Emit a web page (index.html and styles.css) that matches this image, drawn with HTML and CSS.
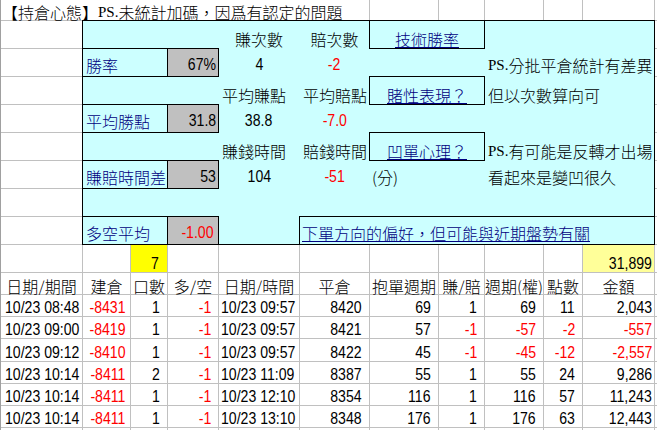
FILE: index.html
```html
<!DOCTYPE html>
<html lang="zh-Hant">
<head>
<meta charset="utf-8">
<title>持倉心態</title>
<link rel="stylesheet" href="styles.css">
</head>
<body>
<div class="sheet">
  <div class="cell title">【持倉心態】<span class="ps">PS.</span>未統計加碼，因爲有認定的問題</div>
  <div class="cell"></div><div class="cell"></div><div class="cell"></div><div class="cell"></div><div class="cell"></div><div class="cell"></div>

  <section class="panel">
    <div class="pc e ctr">賺次數</div>
    <div class="pc f ctr">賠次數</div>
    <div class="pc box g-h ctr"><a class="link">技術勝率</a></div>

    <div class="pc box label b-c mid">勝率</div>
    <div class="pc box stat d mid"><span class="n">67%</span></div>
    <div class="pc e ctr mid"><span class="n">4</span></div>
    <div class="pc f ctr mid neg"><span class="n">-2</span></div>
    <div class="pc i-k note mid"><span class="ps">PS.</span>分批平倉統計有差異</div>

    <div class="pc e lead">平均賺點</div>
    <div class="pc f lead">平均賠點</div>
    <div class="pc box g-h ctr"><a class="link">賭性表現？</a></div>
    <div class="pc i-k note">但以次數算向可</div>

    <div class="pc box label b-c mid">平均勝點</div>
    <div class="pc box stat d mid"><span class="n">31.8</span></div>
    <div class="pc e ctr mid"><span class="n">38.8</span></div>
    <div class="pc f ctr mid neg"><span class="n">-7.0</span></div>

    <div class="pc e lead">賺錢時間</div>
    <div class="pc f lead">賠錢時間</div>
    <div class="pc box g-h ctr"><a class="link">凹單心理？</a></div>
    <div class="pc i-k note"><span class="ps">PS.</span>有可能是反轉才出場</div>

    <div class="pc box label b-c mid">賺賠時間差</div>
    <div class="pc box stat d mid"><span class="n">53</span></div>
    <div class="pc e ctr mid"><span class="n">104</span></div>
    <div class="pc f ctr mid neg"><span class="n">-51</span></div>
    <div class="pc g mid unit">(分)</div>
    <div class="pc i-k note mid">看起來是變凹很久</div>

    <div class="pc blank-row"></div>

    <div class="pc box label b-c mid">多空平均</div>
    <div class="pc box stat d mid neg avg"><span class="n">-1.00</span></div>
    <div class="pc box f-k mid bias"><a class="link">下單方向的偏好，但可能與近期盤勢有關</a></div>
  </section>

  <div class="cell"></div><div class="cell"></div>
  <div class="cell"></div><div class="cell"></div>
  <div class="cell"></div><div class="cell"></div>
  <div class="cell"></div><div class="cell"></div>
  <div class="cell"></div><div class="cell"></div>
  <div class="cell"></div><div class="cell"></div>
  <div class="cell"></div><div class="cell"></div>
  <div class="cell"></div><div class="cell"></div>

  <div class="trow totals">
    <div class="cell"></div><div class="cell"></div>
    <div class="cell count"><span class="n">7</span></div>
    <div class="cell"></div><div class="cell"></div><div class="cell"></div><div class="cell"></div>
    <div class="cell"></div><div class="cell"></div><div class="cell"></div>
    <div class="cell sum"><span class="n">31,899</span></div>
    <div class="cell"></div>
  </div>

  <div class="trow head">
    <div class="cell">日期/期間</div><div class="cell">建倉</div><div class="cell">口數</div><div class="cell">多/空</div>
    <div class="cell">日期/時間</div><div class="cell">平倉</div><div class="cell">抱單週期</div><div class="cell">賺/賠</div>
    <div class="cell">週期(權)</div><div class="cell">點數</div><div class="cell">金額</div><div class="cell"></div>
  </div>

  <div class="trow data">
    <div class="cell"><span class="n">10/23 08:48</span></div><div class="cell neg"><span class="n">-8431</span></div><div class="cell"><span class="n">1</span></div><div class="cell neg"><span class="n">-1</span></div>
    <div class="cell"><span class="n">10/23 09:57</span></div><div class="cell"><span class="n">8420</span></div><div class="cell"><span class="n">69</span></div><div class="cell"><span class="n">1</span></div>
    <div class="cell"><span class="n">69</span></div><div class="cell"><span class="n">11</span></div><div class="cell"><span class="n">2,043</span></div><div class="cell"></div>
  </div>
  <div class="trow data">
    <div class="cell"><span class="n">10/23 09:00</span></div><div class="cell neg"><span class="n">-8419</span></div><div class="cell"><span class="n">1</span></div><div class="cell neg"><span class="n">-1</span></div>
    <div class="cell"><span class="n">10/23 09:57</span></div><div class="cell"><span class="n">8421</span></div><div class="cell"><span class="n">57</span></div><div class="cell neg"><span class="n">-1</span></div>
    <div class="cell neg"><span class="n">-57</span></div><div class="cell neg"><span class="n">-2</span></div><div class="cell neg"><span class="n">-557</span></div><div class="cell"></div>
  </div>
  <div class="trow data">
    <div class="cell"><span class="n">10/23 09:12</span></div><div class="cell neg"><span class="n">-8410</span></div><div class="cell"><span class="n">1</span></div><div class="cell neg"><span class="n">-1</span></div>
    <div class="cell"><span class="n">10/23 09:57</span></div><div class="cell"><span class="n">8422</span></div><div class="cell"><span class="n">45</span></div><div class="cell neg"><span class="n">-1</span></div>
    <div class="cell neg"><span class="n">-45</span></div><div class="cell neg"><span class="n">-12</span></div><div class="cell neg"><span class="n">-2,557</span></div><div class="cell"></div>
  </div>
  <div class="trow data">
    <div class="cell"><span class="n">10/23 10:14</span></div><div class="cell neg"><span class="n">-8411</span></div><div class="cell"><span class="n">2</span></div><div class="cell neg"><span class="n">-1</span></div>
    <div class="cell"><span class="n">10/23 11:09</span></div><div class="cell"><span class="n">8387</span></div><div class="cell"><span class="n">55</span></div><div class="cell"><span class="n">1</span></div>
    <div class="cell"><span class="n">55</span></div><div class="cell"><span class="n">24</span></div><div class="cell"><span class="n">9,286</span></div><div class="cell"></div>
  </div>
  <div class="trow data">
    <div class="cell"><span class="n">10/23 10:14</span></div><div class="cell neg"><span class="n">-8411</span></div><div class="cell"><span class="n">1</span></div><div class="cell neg"><span class="n">-1</span></div>
    <div class="cell"><span class="n">10/23 12:10</span></div><div class="cell"><span class="n">8354</span></div><div class="cell"><span class="n">116</span></div><div class="cell"><span class="n">1</span></div>
    <div class="cell"><span class="n">116</span></div><div class="cell"><span class="n">57</span></div><div class="cell"><span class="n">11,243</span></div><div class="cell"></div>
  </div>
  <div class="trow data">
    <div class="cell"><span class="n">10/23 10:14</span></div><div class="cell neg"><span class="n">-8411</span></div><div class="cell"><span class="n">1</span></div><div class="cell neg"><span class="n">-1</span></div>
    <div class="cell"><span class="n">10/23 13:10</span></div><div class="cell"><span class="n">8348</span></div><div class="cell"><span class="n">176</span></div><div class="cell"><span class="n">1</span></div>
    <div class="cell"><span class="n">176</span></div><div class="cell"><span class="n">63</span></div><div class="cell"><span class="n">12,443</span></div><div class="cell"></div>
  </div>

  <div class="trow">
    <div class="cell"></div><div class="cell"></div><div class="cell"></div><div class="cell"></div>
    <div class="cell"></div><div class="cell"></div><div class="cell"></div><div class="cell"></div>
    <div class="cell"></div><div class="cell"></div><div class="cell"></div><div class="cell"></div>
  </div>
</div>
</body>
</html>
```

FILE: styles.css
```css
* { box-sizing: border-box; }

html, body {
  margin: 0;
  padding: 0;
  background: #fff;
}

body {
  width: 657px;
  height: 430px;
  overflow: hidden;
  font-family: "Noto Sans CJK TC", sans-serif;
  font-weight: 300;
  font-size: 16px;
  line-height: 16px;
  color: #000;
}

.sheet {
  display: grid;
  grid-template-columns: 81px 47px 36px 50px 80px 69px 68px 45px 58px 38px 71px 2px;
  grid-template-rows: 20px repeat(9, 27px) 21px 21px 21px 22px 21px 21px 21px 2px;
  gap: 1px;
  width: 657px;
  height: 430px;
  background: #c0c0c0;
  border-left: 1px solid #a0a0a0;
}

.cell {
  background: #fff;
  display: flex;
  align-items: flex-end;
  padding: 0 2px;
  white-space: nowrap;
  min-width: 0;
}

/* narrow spreadsheet digits */
.n {
  display: inline-block;
  font-family: "Liberation Sans", Arial, sans-serif;
  font-weight: 400;
  transform: scaleX(0.88);
  transform-origin: right bottom;
  white-space: nowrap;
}

.ctr .n,
.data > .cell:nth-child(2) .n { transform-origin: center bottom; }

.data > .cell:nth-child(1) .n,
.data > .cell:nth-child(5) .n { transform-origin: left bottom; }

.title {
  grid-column: span 6;
  padding-left: 1px;
}

.ps { font-family: "Liberation Serif", serif; font-size: 15px; font-weight: 400; }

/* ---------- statistics panel ---------- */
.panel {
  grid-column: 2 / 12;
  grid-row: 2 / 10;
  display: grid;
  grid-template-columns: 47px 36px 50px 80px 69px 68px 45px 58px 38px 71px;
  grid-template-rows: repeat(8, 27px);
  gap: 1px;
  background: #ccffff;
  outline: 1px solid #000;
}

.pc {
  display: flex;
  align-items: flex-end;
  padding: 0 2px 1px;
  white-space: nowrap;
  min-width: 0;
}

.pc.mid { padding-bottom: 3px; }

.b-c { grid-column: 1 / 3; }
.d { grid-column: 3; }
.e { grid-column: 4; }
.f { grid-column: 5; }
.g { grid-column: 6; }
.g-h { grid-column: 6 / 8; }
.i-k { grid-column: 8 / 11; }
.f-k { grid-column: 5 / 11; }
.blank-row { grid-column: 1 / -1; }

.ctr { justify-content: center; }
.lead { padding-left: 3px; }
.note { padding-left: 3px; }
.unit { padding-left: 2px; }

.box { outline: 1px solid #000; }

.label {
  color: #000080;
  padding-left: 3px;
}

.stat {
  background: #c0c0c0;
  justify-content: flex-end;
}

.stat.avg { padding-right: 5px; }

.bias { padding-left: 2px; }

.link {
  color: #000080;
  text-decoration: underline;
}

.neg { color: #ff0000; }

/* ---------- trade table ---------- */
.trow { display: contents; }

.count {
  background: #ffff00;
  justify-content: flex-end;
  padding-right: 8px;
}

.sum {
  background: #ffff99;
  justify-content: flex-end;
  padding-right: 2px;
}

.head > .cell { justify-content: center; padding: 0; }

.data > .cell { justify-content: flex-end; padding-right: 7px; }
.data > .cell:nth-child(1) { justify-content: flex-start; padding-left: 4px; }
.data > .cell:nth-child(2) { justify-content: center; padding-right: 0; }
.data > .cell:nth-child(5) { justify-content: flex-start; padding-left: 2px; }
.data > .cell:nth-child(11) { padding-right: 2px; }
```
